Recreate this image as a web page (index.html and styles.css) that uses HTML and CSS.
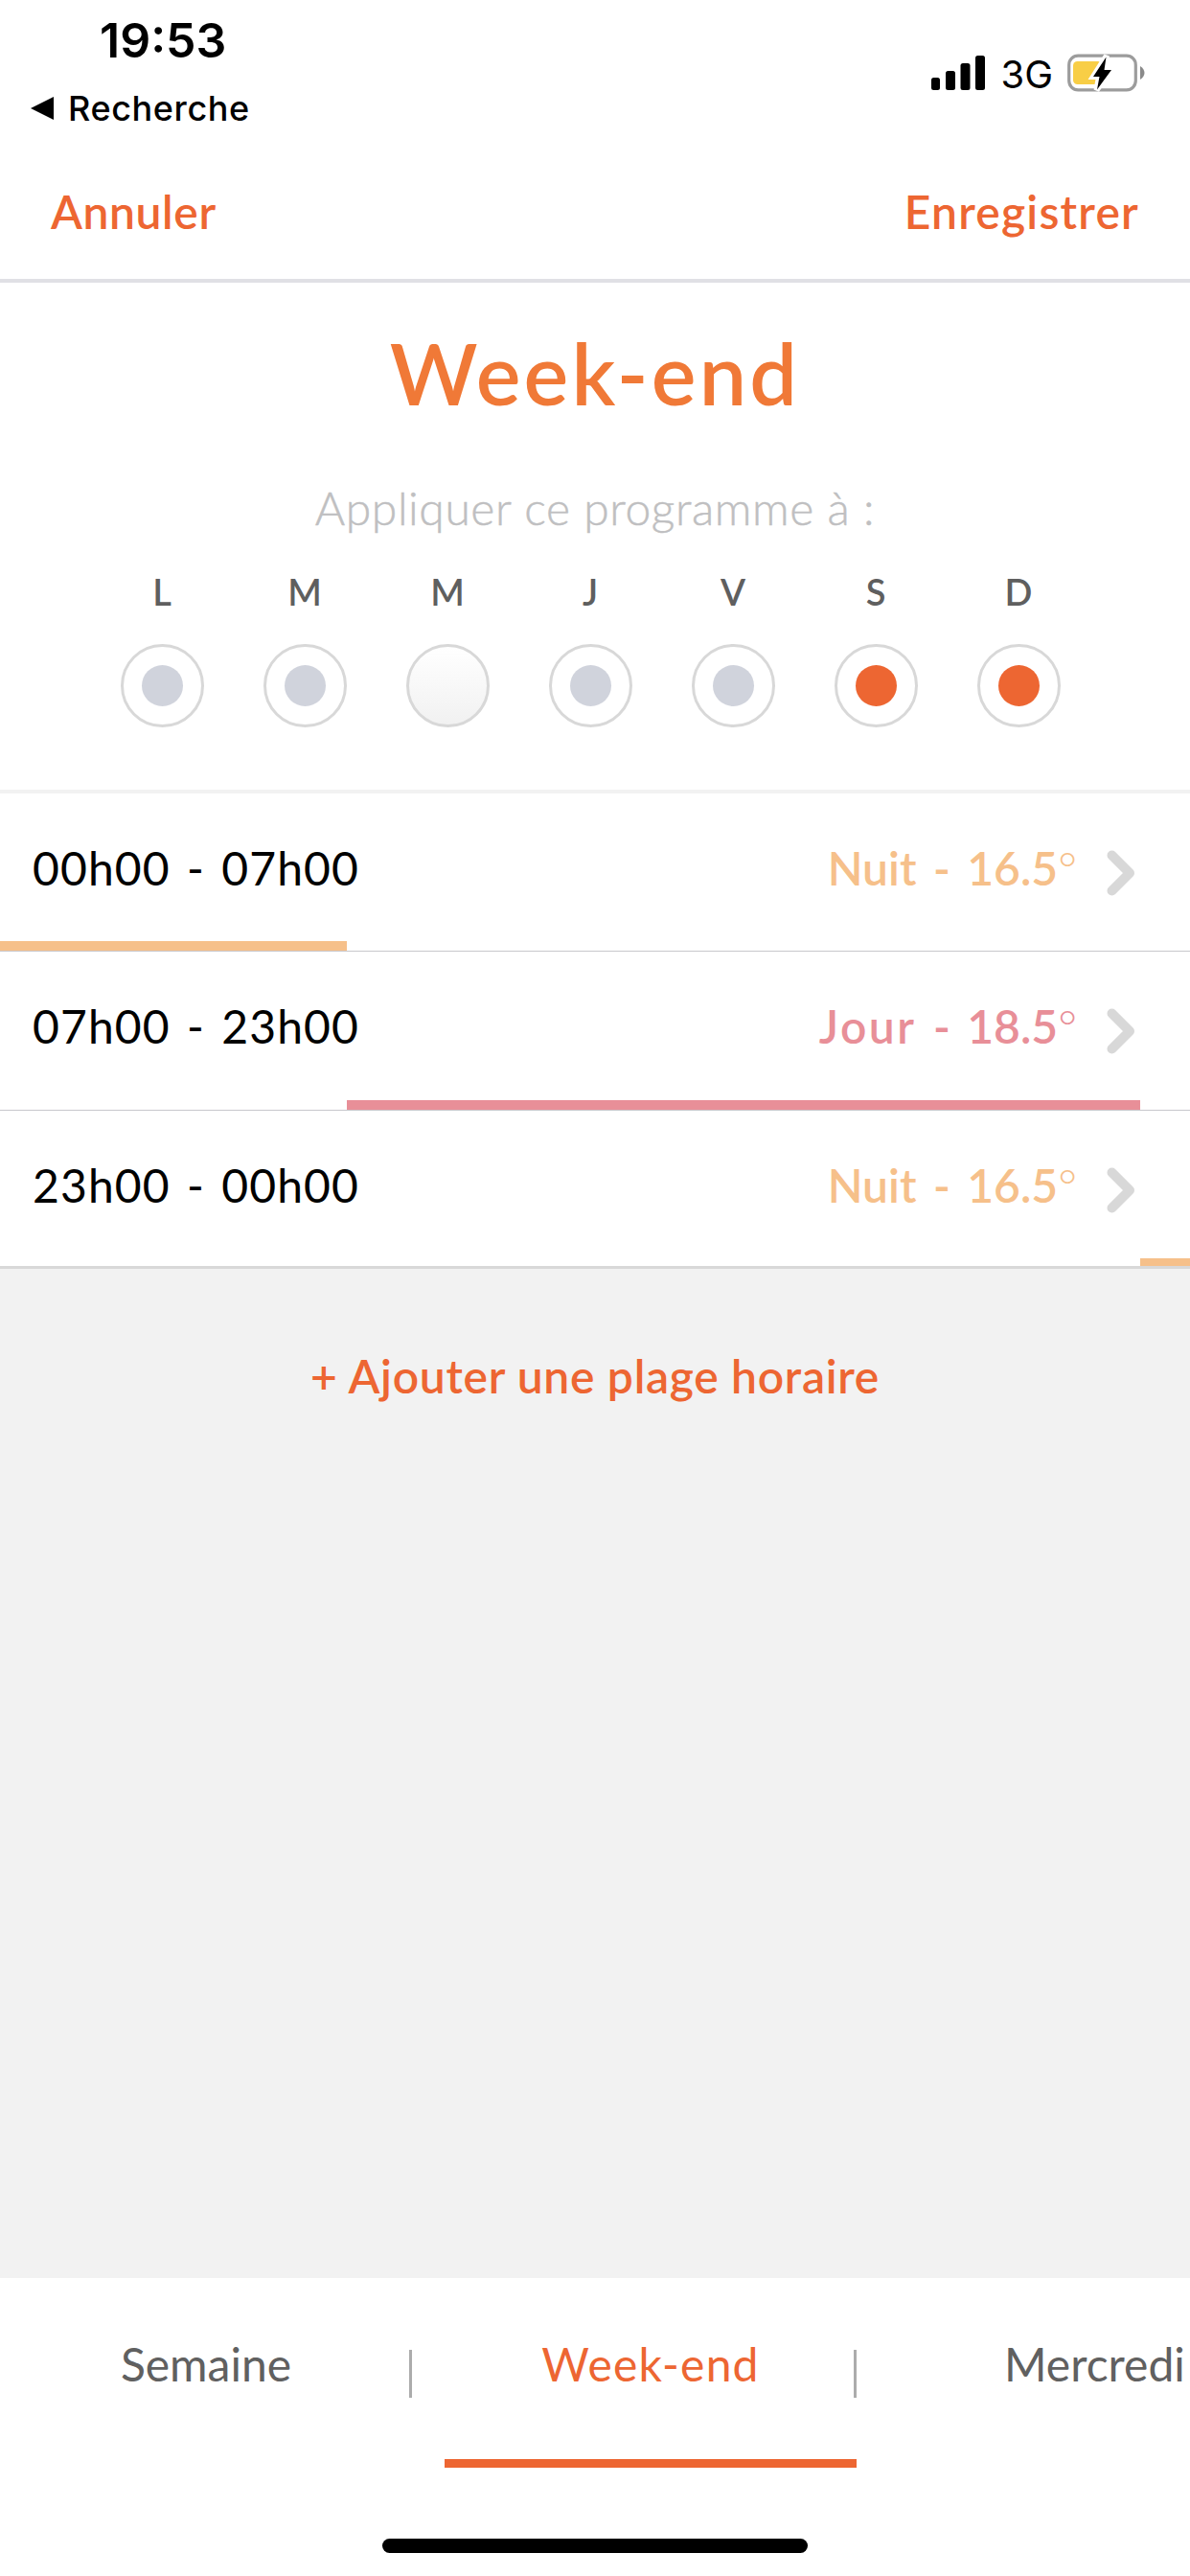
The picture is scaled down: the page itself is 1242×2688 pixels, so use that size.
FILE: index.html
```
<!DOCTYPE html>
<html lang="fr">
<head>
    <meta charset="UTF-8">
    <meta name="viewport" content="width=device-width, initial-scale=1.0">
    <title>Week-end</title>
    <link rel="stylesheet" href="styles.css">
</head>
<body>
    <div id="status">
        <div class="left">
            <div class="time">19:53</div>
            <div class="back">
                <svg width="24" height="24" viewBox="0 0 24 24"><path d="M0 12L24 0V24Z"/></svg>
                <span>Recherche</span>
            </div>
        </div>
        <div class="right">
            <svg class="signal" width="56" height="36" viewBox="0 0 56 36">
                <rect x="0" y="23" width="9" height="13" rx="2.5"/>
                <rect x="15" y="16" width="10" height="20" rx="2.5"/>
                <rect x="30.5" y="8" width="10" height="28" rx="2.5"/>
                <rect x="46" y="0" width="10" height="36" rx="2.5"/>
            </svg>
            <span class="network">3G</span>
            <svg class="battery" width="81" height="40" viewBox="0 0 81 40">
                <rect x="1.7" y="2.2" width="69.6" height="35.6" rx="9.5" fill="none" stroke="#9c9c9c" stroke-width="3.2"/>
                <path d="M76 13C82 17 82 23 76 27Z" fill="#8a8a8a"/>
                <rect x="6" y="8" width="30" height="24" rx="4.5" fill="#f8ce46"/>
                <path d="M41 2L27 24H33L30.500 38L46 17H38.500Z" fill="#fff" stroke="#fff" stroke-width="6"/>
                <path d="M40.500 3.500L27 24H33.500L31 37.500L46 17H38.500Z"/>
            </svg>
        </div>
    </div>
    <div id="nav">
        <div class="cancel">Annuler</div>
        <div class="save">Enregistrer</div>
    </div>
    <div id="head">
        <h1>Week-end</h1>
        <div class="apply">Appliquer ce programme à :</div>
        <div class="days">
            <div class="day"><span>L</span><div class="circle"><div class="dot"></div></div></div>
            <div class="day"><span>M</span><div class="circle"><div class="dot"></div></div></div>
            <div class="day"><span>M</span><div class="circle empty"></div></div>
            <div class="day"><span>J</span><div class="circle"><div class="dot"></div></div></div>
            <div class="day"><span>V</span><div class="circle"><div class="dot"></div></div></div>
            <div class="day"><span>S</span><div class="circle"><div class="dot on"></div></div></div>
            <div class="day"><span>D</span><div class="circle"><div class="dot on"></div></div></div>
        </div>
    </div>
    <div id="slots">
        <div class="slot nuit">
            <div class="line">
                <div class="hours">00h00 - 07h00</div>
                <div class="temp"><span class="name">Nuit</span> - 16.5<span class="deg">°</span></div>
                <svg class="arrow" width="30" height="48" viewBox="0 0 30 48"><path d="M5.500 5.500L24 24L5.500 42.500"/></svg>
            </div>
            <div class="bar" style="margin-left:0;width:29.15%"></div>
        </div>
        <div class="slot jour">
            <div class="line">
                <div class="hours">07h00 - 23h00</div>
                <div class="temp"><span class="name">Jour</span> - 18.5<span class="deg">°</span></div>
                <svg class="arrow" width="30" height="48" viewBox="0 0 30 48"><path d="M5.500 5.500L24 24L5.500 42.500"/></svg>
            </div>
            <div class="bar" style="margin-left:29.15%;width:66.67%"></div>
        </div>
        <div class="slot nuit">
            <div class="line">
                <div class="hours">23h00 - 00h00</div>
                <div class="temp"><span class="name">Nuit</span> - 16.5<span class="deg">°</span></div>
                <svg class="arrow" width="30" height="48" viewBox="0 0 30 48"><path d="M5.500 5.500L24 24L5.500 42.500"/></svg>
            </div>
            <div class="bar" style="margin-left:95.82%;width:4.18%"></div>
        </div>
    </div>
    <div id="add">+ Ajouter une plage horaire</div>
    <div id="tabs">
        <div class="tab">Semaine</div>
        <div class="tab active">Week-end</div>
        <div class="tab last">Mercredi</div>
    </div>
    <div id="home"><div></div></div>
</body>
</html>
```

FILE: styles.css
```
*{
    box-sizing:border-box;
}
body{
    margin:0;
    width:1242px;
    height:2688px;
    display:flex;
    flex-direction:column;
    overflow:hidden;
    background:#fff;
    font-family:Lato, "Open Sans", sans-serif;
    font-size:48px;
    white-space:nowrap;
}
svg{
    display:block;
}
#status{
    height:152px;
    display:flex;
    justify-content:space-between;
    font-family:Inter, "Liberation Sans", sans-serif;
}
.time{
    margin:12px 0 0 104px;
    height:60px;
    line-height:60px;
    font-size:50px;
    font-weight:600;
}
.back{
    display:flex;
    align-items:center;
    gap:15px;
    height:44px;
    margin:19px 0 0 32px;
    font-size:36px;
    font-weight:500;
    letter-spacing:0.6px;
}
.right{
    height:40px;
    margin:56px 47px 0 0;
    display:flex;
    align-items:center;
}
.network{
    margin:3px 15px 0 16px;
    font-size:40px;
    line-height:40px;
}
#nav{
    height:143px;
    padding:0 53px;
    display:flex;
    justify-content:space-between;
    line-height:138px;
    font-weight:600;
    letter-spacing:0.6px;
    color:#ed6632;
    border-bottom:4px solid #e0e0e5;
}
.save{
    letter-spacing:1.2px;
}
#head{
    height:533px;
    border-bottom:4px solid #f2f2f2;
    display:flex;
    flex-direction:column;
    align-items:center;
}
h1{
    margin:39px 0 0;
    font-size:88px;
    line-height:110px;
    font-weight:600;
    letter-spacing:3.2px;
    color:#f07937;
}
.apply{
    margin-top:56px;
    line-height:60px;
    font-weight:300;
    letter-spacing:0.6px;
    color:#bfbfc1;
    -webkit-text-stroke:0.5px #bfbfc1;
}
.days{
    display:flex;
    width:1043px;
    margin:32px 10px 0 0;
}
.day{
    flex:1;
    display:flex;
    flex-direction:column;
    align-items:center;
    gap:30px;
    font-size:38px;
    line-height:50px;
    font-weight:600;
    color:#5f5f5f;
}
.circle{
    width:87px;
    height:87px;
    border:3px solid #d8d8d8;
    border-radius:50%;
    display:flex;
    align-items:center;
    justify-content:center;
}
.empty{
    background:linear-gradient(#fff, #f1f1f1);
}
.dot{
    width:43px;
    height:43px;
    border-radius:50%;
    background:#d0d3dc;
}
.on{
    background:#ed6632;
}
.slot{
    height:165px;
    display:flex;
    flex-direction:column;
    border-bottom:1px solid #c8c7cc;
}
.slot:nth-child(2){
    height:166px;
}
.line{
    flex:1;
    padding:0 57px 0 34px;
    display:flex;
    align-items:center;
}
.hours{
    flex:1;
    letter-spacing:1.1px;
    word-spacing:4px;
    color:#000;
}
.temp{
    font-weight:600;
    word-spacing:5.5px;
}
.deg{
    font-weight:300;
}
.arrow{
    margin:11px 0 0 31px;
    fill:none;
    stroke:#d8d8d8;
    stroke-width:10;
    stroke-linecap:round;
    stroke-linejoin:round;
}
.bar{
    height:10px;
}
.nuit .temp{
    color:#f6c08a;
}
.nuit .bar{
    background:#f6c08a;
}
.jour .temp{
    color:#e88f98;
}
.jour .name{
    letter-spacing:2.5px;
}
.jour .bar{
    background:#e88f98;
}
.slot:last-child{
    border-bottom:3px solid #d8d8d8;
}
.slot:last-child .bar{
    height:8px;
}
#add{
    flex:1;
    padding-top:82px;
    line-height:60px;
    text-align:center;
    font-weight:600;
    letter-spacing:0.7px;
    color:#ed6632;
    background:#f2f2f2;
}
#tabs{
    height:198px;
    display:flex;
    gap:34px;
}
.tab{
    flex:none;
    width:430px;
    height:198px;
    padding-top:60px;
    line-height:60px;
    text-align:center;
    color:#606060;
    background:linear-gradient(#acacac, #acacac) right 0 top 75px / 3px 50px no-repeat;
}
.active{
    letter-spacing:1.2px;
    color:#ed6632;
    border-bottom:9px solid #ed6632;
}
.last{
    width:314px;
    padding-left:120px;
    text-align:left;
    background:none;
}
#home{
    height:113px;
    padding-top:74px;
}
#home div{
    width:444px;
    height:15px;
    margin:0 auto;
    border-radius:8px;
    background:#000;
}
```
